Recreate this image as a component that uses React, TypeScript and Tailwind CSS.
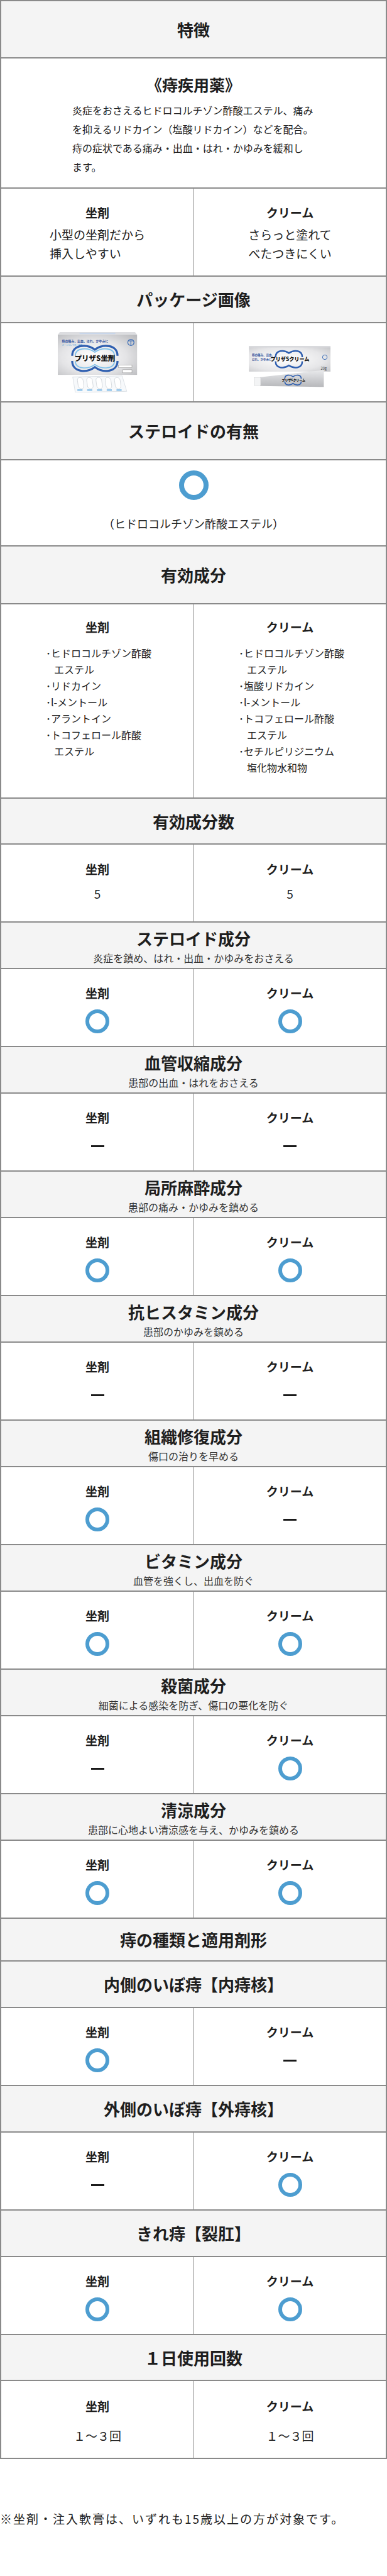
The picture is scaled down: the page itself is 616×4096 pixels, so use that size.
import React from 'react';

const line = 'border-[#8a8a8a]';

type Mark = 'o' | '-';

const effectRows: { title: string; sub: string; a: Mark; b: Mark }[] = [
  { title: 'ステロイド成分', sub: '炎症を鎮め、はれ・出血・かゆみをおさえる', a: 'o', b: 'o' },
  { title: '血管収縮成分', sub: '患部の出血・はれをおさえる', a: '-', b: '-' },
  { title: '局所麻酔成分', sub: '患部の痛み・かゆみを鎮める', a: 'o', b: 'o' },
  { title: '抗ヒスタミン成分', sub: '患部のかゆみを鎮める', a: '-', b: '-' },
  { title: '組織修復成分', sub: '傷口の治りを早める', a: 'o', b: '-' },
  { title: 'ビタミン成分', sub: '血管を強くし、出血を防ぐ', a: 'o', b: 'o' },
  { title: '殺菌成分', sub: '細菌による感染を防ぎ、傷口の悪化を防ぐ', a: '-', b: 'o' },
  { title: '清涼成分', sub: '患部に心地よい清涼感を与え、かゆみを鎮める', a: 'o', b: 'o' },
];

const typeRows: { title: string; a: Mark; b: Mark }[] = [
  { title: '内側のいぼ痔【内痔核】', a: 'o', b: '-' },
  { title: '外側のいぼ痔【外痔核】', a: '-', b: 'o' },
  { title: 'きれ痔【裂肛】', a: 'o', b: 'o' },
];

function Circle() {
  return <span className="block h-[38px] w-[38px] rounded-full border-[6px] border-[#4d9dd0]" />;
}

function Dash() {
  return <span className="block h-[3px] w-[21px] bg-[#1a1a1a]" />;
}

function Title({ children, className = 'h-[74px]' }: { children: React.ReactNode; className?: string }) {
  return (
    <div className={`flex items-center justify-center border-b-2 ${line} bg-[#f4f4f4] ${className}`}>
      <h2 className="text-[26px] font-bold leading-[30px] text-[#1e1e1e]">{children}</h2>
    </div>
  );
}

function SubTitle({ title, sub }: { title: string; sub: string }) {
  return (
    <div className={`flex h-[74px] flex-col items-center border-b-2 ${line} bg-[#f4f4f4] pt-[10px]`}>
      <h2 className="text-[26px] font-bold leading-[30px] text-[#1e1e1e]">{title}</h2>
      <p className="mt-[6px] text-[16px] leading-[20px] text-[#333]">{sub}</p>
    </div>
  );
}

function Cell({ label, divider, children, className = 'pt-[26px]' }: { label: string; divider?: boolean; children: React.ReactNode; className?: string }) {
  return (
    <div className={`flex flex-col items-center ${divider ? `border-l ${line}` : ''} ${className}`}>
      <p className="text-[19px] font-bold leading-[24px] text-[#1e1e1e]">{label}</p>
      {children}
    </div>
  );
}

function MarkRow({ a, b }: { a: Mark; b: Mark }) {
  const show = (m: Mark) => (
    <div className="mt-[14px] flex h-[38px] items-center justify-center">{m === 'o' ? <Circle /> : <Dash />}</div>
  );
  return (
    <div className={`grid h-[124px] grid-cols-2 border-b-2 ${line}`}>
      <Cell label="坐剤">{show(a)}</Cell>
      <Cell label="クリーム" divider>
        {show(b)}
      </Cell>
    </div>
  );
}

function SuppositoryBox() {
  return (
    <svg viewBox="0 0 155 117" className="h-[96px] w-[127px]">
      <defs>
        <radialGradient id="boxA" cx="0.45" cy="0.55" r="0.75">
          <stop offset="0" stopColor="#ffffff" />
          <stop offset="0.55" stopColor="#e4e4e6" />
          <stop offset="1" stopColor="#b9babd" />
        </radialGradient>
      </defs>
      <rect x="0" y="5" width="154" height="78" fill="url(#boxA)" />
      <polygon points="4,0 150,0 154,5 0,5" fill="#dcdde0" />
      <rect x="42" y="1" width="70" height="3" rx="1.5" fill="#c8d6ea" />
      <text x="8" y="19" fontSize="6" fontWeight="700" fill="#2c4f9c">痔の痛み、出血、はれ、かゆみに</text>
      <text x="8" y="27" fontSize="4" fill="#4aa3dc">スーッとして効く坐剤</text>
      <path d="M28 46 C28 24 56 22 72 34 C88 22 116 24 116 46" fill="none" stroke="#2f5fb0" strokeWidth="4" />
      <path d="M34 46 C34 30 58 29 72 39 C86 29 110 30 110 46" fill="none" stroke="#7cc0ea" strokeWidth="2" />
      <path d="M28 56 C28 78 56 80 72 68 C88 80 116 78 116 56" fill="none" stroke="#2f5fb0" strokeWidth="4" />
      <path d="M34 56 C34 72 58 73 72 63 C86 73 110 72 110 56" fill="none" stroke="#7cc0ea" strokeWidth="2" />
      <text x="72" y="56" textAnchor="middle" fontSize="14" fontWeight="900" fill="#111">プリザS坐剤</text>
      <circle cx="142" cy="20" r="6" fill="none" stroke="#3b6db7" strokeWidth="1.5" />
      <path d="M138 17 L146 17 M142 17 L142 25" stroke="#3b6db7" strokeWidth="1.5" />
      <rect x="118" y="64" width="26" height="5" fill="#fff" stroke="#888" strokeWidth="0.6" />
      <rect x="126" y="73" width="18" height="6" fill="#fff" stroke="#888" strokeWidth="0.6" />
      <polygon points="29,87 125,85 134,115 34,117" fill="#f7f9fb" stroke="#d5dbe2" strokeWidth="1" />
      {[0, 1, 2, 3, 4].map((i) => (
        <rect key={i} x={38 + i * 18} y="88" width="11" height="22" rx="5.5" fill="#fff" stroke="#cfd3d8" strokeWidth="1" transform={`skewX(8) translate(-13 0)`} />
      ))}
      {[0, 1, 2, 3, 4].map((i) => (
        <rect key={`l${i}`} x={38 + i * 19} y="111" width="10" height="3" fill="#8cc2ea" />
      ))}
    </svg>
  );
}

function CreamBox() {
  return (
    <svg viewBox="0 0 160 82" className="h-[67px] w-[131px]">
      <defs>
        <radialGradient id="boxB" cx="0.45" cy="0.5" r="0.8">
          <stop offset="0" stopColor="#ffffff" />
          <stop offset="0.6" stopColor="#e6e6e8" />
          <stop offset="1" stopColor="#bdbec1" />
        </radialGradient>
        <linearGradient id="tube" x1="0" y1="0" x2="0" y2="1">
          <stop offset="0" stopColor="#e9eaec" />
          <stop offset="0.5" stopColor="#cfd0d3" />
          <stop offset="1" stopColor="#b7b8bb" />
        </linearGradient>
      </defs>
      <rect x="0" y="2" width="159" height="48" fill="url(#boxB)" />
      <rect x="0" y="0" width="159" height="3" fill="#d9dadd" />
      <text x="6" y="20" fontSize="5.5" fontWeight="700" fill="#2c4f9c">痔の痛み、出血、</text>
      <text x="6" y="28" fontSize="5.5" fontWeight="700" fill="#2c4f9c">はれ、かゆみに</text>
      <path d="M52 22 C52 8 68 7 78 14 C88 7 104 8 104 22" fill="none" stroke="#2f5fb0" strokeWidth="3" />
      <path d="M52 30 C52 44 68 45 78 38 C88 45 104 44 104 30" fill="none" stroke="#2f5fb0" strokeWidth="3" />
      <text x="80" y="29" textAnchor="middle" fontSize="10" fontWeight="900" fill="#111">プリザSクリーム</text>
      <circle cx="148" cy="22" r="4.5" fill="none" stroke="#3b6db7" strokeWidth="1.2" />
      <text x="140" y="46" fontSize="7" fill="#444">20g</text>
      <polygon points="22,61 146,47 146,80 22,78" fill="url(#tube)" />
      <rect x="10" y="62" width="13" height="15" fill="#f3f4f5" stroke="#c9cacc" strokeWidth="0.6" />
      <path d="M70 64 C70 56 80 55 86 60 C92 55 102 56 102 64" fill="none" stroke="#2f5fb0" strokeWidth="2" />
      <path d="M70 69 C70 77 80 78 86 73 C92 78 102 77 102 69" fill="none" stroke="#2f5fb0" strokeWidth="2" />
      <text x="87" y="69" textAnchor="middle" fontSize="6" fontWeight="900" fill="#111">プリザSクリーム</text>
    </svg>
  );
}

export default function App() {
  return (
    <div className="min-h-[4096px] w-full bg-white font-['Noto_Sans_CJK_JP','Noto_Sans',sans-serif] text-[#222]">
      <div className={`border-x-2 border-t-2 ${line}`}>
        <Title className="h-[91px]">特徴</Title>

        <div className={`flex h-[207px] flex-col items-center border-b-2 ${line} pt-[26px]`}>
          <h3 className="text-[25px] font-bold leading-[30px] text-[#1e1e1e]">《痔疾用薬》</h3>
          <p className="mt-[11px] w-[386px] whitespace-nowrap text-[16px] leading-[30px] text-[#222]">
            炎症をおさえるヒドロコルチゾン酢酸エステル、痛み
            <br />
            を抑えるリドカイン（塩酸リドカイン）などを配合。
            <br />
            痔の症状である痛み・出血・はれ・かゆみを緩和し
            <br />
            ます。
          </p>
        </div>

        <div className={`grid h-[140px] grid-cols-2 border-b-2 ${line}`}>
          <Cell label="坐剤">
            <p className="mt-[8px] text-[19px] leading-[30px]">
              小型の坐剤だから
              <br />
              挿入しやすい
            </p>
          </Cell>
          <Cell label="クリーム" divider>
            <p className="mt-[8px] text-[19px] leading-[30px]">
              さらっと塗れて
              <br />
              べたつきにくい
            </p>
          </Cell>
        </div>

        <Title>パッケージ画像</Title>
        <div className={`grid h-[126px] grid-cols-2 border-b-2 ${line}`}>
          <div className="flex items-center justify-center">
            <SuppositoryBox />
          </div>
          <div className={`flex items-center justify-center border-l ${line} pt-[14px]`}>
            <CreamBox />
          </div>
        </div>

        <Title className="h-[92px]">ステロイドの有無</Title>
        <div className={`flex h-[137px] flex-col items-center border-b-2 ${line} pt-[16px]`}>
          <span className="block h-[47px] w-[47px] rounded-full border-[8px] border-[#4d9dd0]" />
          <p className="mt-[25px] text-[18px] leading-[24px]">（ヒドロコルチゾン酢酸エステル）</p>
        </div>

        <Title className="h-[92px]">有効成分</Title>
        <div className={`grid h-[309px] grid-cols-2 border-b-2 ${line}`}>
          <div className="pt-[24px]">
            <p className="text-center text-[19px] font-bold leading-[24px] text-[#1e1e1e]">坐剤</p>
            <div className="mt-[16px] pl-[71px] text-[16px] leading-[26px]">
              <p>･ヒドロコルチゾン酢酸</p>
              <p className="pl-[13px]">エステル</p>
              <p>･リドカイン</p>
              <p>･l-メントール</p>
              <p>･アラントイン</p>
              <p>･トコフェロール酢酸</p>
              <p className="pl-[13px]">エステル</p>
            </div>
          </div>
          <div className={`border-l ${line} pt-[24px]`}>
            <p className="text-center text-[19px] font-bold leading-[24px] text-[#1e1e1e]">クリーム</p>
            <div className="mt-[16px] pl-[71px] text-[16px] leading-[26px]">
              <p>･ヒドロコルチゾン酢酸</p>
              <p className="pl-[13px]">エステル</p>
              <p>･塩酸リドカイン</p>
              <p>･l-メントール</p>
              <p>･トコフェロール酢酸</p>
              <p className="pl-[13px]">エステル</p>
              <p>･セチルピリジニウム</p>
              <p className="pl-[13px]">塩化物水和物</p>
            </div>
          </div>
        </div>

        <Title className="h-[73px]">有効成分数</Title>
        <div className={`grid h-[124px] grid-cols-2 border-b-2 ${line}`}>
          <Cell label="坐剤" className="pt-[27px]">
            <p className="mt-[15px] text-[19px] leading-[24px]">5</p>
          </Cell>
          <Cell label="クリーム" divider className="pt-[27px]">
            <p className="mt-[15px] text-[19px] leading-[24px]">5</p>
          </Cell>
        </div>

        {effectRows.map((row) => (
          <React.Fragment key={row.title}>
            <SubTitle title={row.title} sub={row.sub} />
            <MarkRow a={row.a} b={row.b} />
          </React.Fragment>
        ))}

        <Title className="h-[68px]">痔の種類と適用剤形</Title>
        {typeRows.map((row) => (
          <React.Fragment key={row.title}>
            <Title>{row.title}</Title>
            <MarkRow a={row.a} b={row.b} />
          </React.Fragment>
        ))}

        <Title className="h-[73px]">１日使用回数</Title>
        <div className={`grid h-[124px] grid-cols-2 border-b-2 ${line}`}>
          <Cell label="坐剤" className="pt-[28px]">
            <p className="mt-[23px] text-[19px] leading-[24px]">１～３回</p>
          </Cell>
          <Cell label="クリーム" divider className="pt-[28px]">
            <p className="mt-[23px] text-[19px] leading-[24px]">１～３回</p>
          </Cell>
        </div>
      </div>

      <p className="mt-[83px] text-[19px] leading-[24px] tracking-[2px] text-[#222]">
        ※坐剤・注入軟膏は、いずれも15歳以上の方が対象です。
      </p>
    </div>
  );
}
